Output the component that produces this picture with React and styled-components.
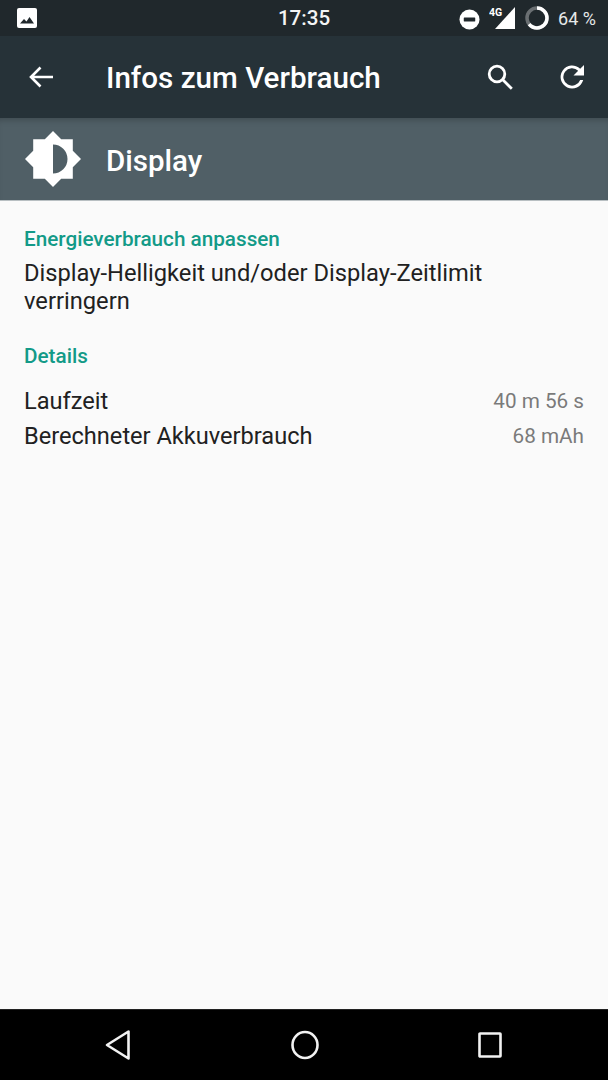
import React from "react";
import styled, { createGlobalStyle } from "styled-components";

const GlobalStyle = createGlobalStyle`
  html, body {
    margin: 0;
    padding: 0;
    background: #fafafa;
    font-family: Roboto, "Liberation Sans", sans-serif;
  }
`;

const Page = styled.div`
  width: 608px;
  height: 1080px;
  display: flex;
  flex-direction: column;
  overflow: hidden;
  background: #fafafa;
`;

const StatusBar = styled.div`
  height: 36px;
  flex: none;
  background: #20282c;
  display: grid;
  grid-template-columns: 1fr auto 1fr;
  align-items: center;
  padding: 0 12px 0 17px;
  color: #fff;
`;

const StatusLeft = styled.div`
  display: flex;
  align-items: center;
`;

const Clock = styled.div`
  margin-right: 5px;
  font-size: 20.6px;
  font-weight: 500;
  color: #f4f5f5;
`;

const StatusRight = styled.div`
  display: flex;
  align-items: center;
  justify-content: flex-end;
  gap: 9px;
`;

const Battery = styled.span`
  font-size: 18px;
  color: #e6e8e8;
`;

const Toolbar = styled.div`
  height: 82px;
  flex: none;
  background: #263238;
  display: flex;
  align-items: center;
  padding: 0 22px 0 28px;
  color: #fff;
`;

const Title = styled.h1`
  margin: 2px 0 0 52px;
  font-size: 29.6px;
  font-weight: 500;
  flex: 1;
`;

const ToolIcons = styled.div`
  display: flex;
  align-items: center;
  gap: 44px;
`;

const SubHeader = styled.div`
  height: 83px;
  flex: none;
  background: #505f66;
  box-shadow: inset 0 6px 6px -4px rgba(0, 0, 0, 0.22);
  border-bottom: 1px solid #b8bfc2;
  box-sizing: border-box;
  display: flex;
  align-items: center;
  padding-left: 25px;
`;

const SubTitle = styled.div`
  margin: 3px 0 0 25px;
  font-size: 29.5px;
  font-weight: 500;
  color: #fff;
`;

const Content = styled.main`
  flex: 1;
  padding: 26px 24px 0;
`;

const SectionTitle = styled.h2`
  margin: 0;
  font-size: 20.7px;
  line-height: 24px;
  font-weight: 500;
  color: #139a88;
`;

const Summary = styled.p`
  margin: 8px 0 0;
  font-size: 23.7px;
  line-height: 28px;
  color: #212121;
`;

const DetailsBlock = styled.section`
  margin-top: 29px;
`;

const DetailRows = styled.div`
  margin-top: 15px;
`;

const Row = styled.div`
  height: 35.5px;
  display: flex;
  align-items: center;
  justify-content: space-between;
`;

const Label = styled.span`
  font-size: 23.6px;
  color: #212121;
`;

const Value = styled.span`
  font-size: 20.7px;
  color: #7a7a7a;
`;

const NavBar = styled.nav`
  height: 71px;
  flex: none;
  background: #000;
  border-top: 1px solid #222;
  box-sizing: border-box;
  display: flex;
  align-items: center;
  justify-content: space-between;
  padding: 0 106px 0 105px;
`;

const DndSvg = styled.svg`
  margin-top: 2px;
`;

const ImageIcon = () => (
  <svg width="20" height="20" viewBox="0 0 20 20">
    <rect width="20" height="20" rx="2" fill="#fff" />
    <path d="M3 15.5l4-4.5 2.5 2.5 3-4.5 4.5 6.500z" fill="#20282c" />
  </svg>
);

const DndIcon = () => (
  <DndSvg width="21" height="21" viewBox="0 0 22 22">
    <circle cx="11" cy="11" r="10.500" fill="#fff" />
    <rect x="5" y="9" width="12" height="4" rx="0.500" fill="#20282c" />
  </DndSvg>
);

const SignalIcon = () => (
  <svg width="27" height="24" viewBox="0 0 27 24">
    <path d="M26 1v22H6z" fill="#fff" />
    <text x="0" y="10" fontSize="10.500" fontWeight="700" fontFamily="Roboto, sans-serif" fill="#fff">4G</text>
  </svg>
);

const BatteryRing = () => (
  <svg width="24" height="24" viewBox="0 0 24 24" fill="none" strokeWidth="3.500">
    <circle cx="12" cy="12" r="10" stroke="#6a6f72" />
    <circle cx="12" cy="12" r="10" stroke="#fff" strokeDasharray="40.200 62.830" transform="rotate(-90 12 12)" />
  </svg>
);

const BackIcon = () => (
  <svg width="26" height="26" viewBox="0 0 26 26" fill="none" stroke="#fff" strokeWidth="2.600">
    <path d="M25 13H3M12.500 3.500L3 13l9.500 9.500" />
  </svg>
);

const SearchIcon = () => (
  <svg width="28" height="28" viewBox="0 0 28 28" fill="none" stroke="#fff" strokeWidth="2.800">
    <circle cx="11" cy="11" r="7.800" />
    <path d="M16.800 16.800l9 9" />
  </svg>
);

const RefreshIcon = () => (
  <svg width="28" height="28" viewBox="0 0 28 28">
    <path d="M22.200 5.800A11.500 11.500 0 1 0 25.200 17h-3a8.700 8.700 0 1 1-2-9.200L15.500 12.500H26V2z" fill="#fff" />
  </svg>
);

const BrightnessIcon = () => (
  <svg width="56" height="56" viewBox="0 0 56 56">
    <path
      fillRule="evenodd"
      fill="#fff"
      d="M28 0l8.200 8.200h11.600v11.600L56 28l-8.200 8.200v11.600H36.200L28 56l-8.200-8.200H8.200V36.200L0 28l8.200-8.200V8.200h11.600zM28 13.500v29a14.500 14.500 0 0 0 0-29z"
    />
  </svg>
);

const NavBack = () => (
  <svg width="26" height="32" viewBox="0 0 26 32" fill="none" stroke="#f2f2f2" strokeWidth="2.600" strokeLinejoin="round">
    <path d="M23.500 2.500v27L2 16z" />
  </svg>
);

const NavHome = () => (
  <svg width="28" height="30" viewBox="0 0 28 30" fill="none" stroke="#f2f2f2" strokeWidth="2.600">
    <ellipse cx="14" cy="15" rx="12.500" ry="13" />
  </svg>
);

const NavRecent = () => (
  <svg width="24" height="26" viewBox="0 0 24 26" fill="none" stroke="#f2f2f2" strokeWidth="2.600" strokeLinejoin="round">
    <rect x="1.500" y="1.500" width="21" height="23" rx="0.500" />
  </svg>
);

const details = [
  { label: "Laufzeit", value: "40 m 56 s" },
  { label: "Berechneter Akkuverbrauch", value: "68 mAh" },
];

export default function App() {
  return (
    <Page>
      <GlobalStyle />
      <StatusBar>
        <StatusLeft>
          <ImageIcon />
        </StatusLeft>
        <Clock>17:35</Clock>
        <StatusRight>
          <DndIcon />
          <SignalIcon />
          <BatteryRing />
          <Battery>64 %</Battery>
        </StatusRight>
      </StatusBar>
      <Toolbar>
        <BackIcon />
        <Title>Infos zum Verbrauch</Title>
        <ToolIcons>
          <SearchIcon />
          <RefreshIcon />
        </ToolIcons>
      </Toolbar>
      <SubHeader>
        <BrightnessIcon />
        <SubTitle>Display</SubTitle>
      </SubHeader>
      <Content>
        <section>
          <SectionTitle>Energieverbrauch anpassen</SectionTitle>
          <Summary>
            Display-Helligkeit und/oder Display-Zeitlimit
            <br />
            verringern
          </Summary>
        </section>
        <DetailsBlock>
          <SectionTitle>Details</SectionTitle>
          <DetailRows>
            {details.map((item) => (
              <Row key={item.label}>
                <Label>{item.label}</Label>
                <Value>{item.value}</Value>
              </Row>
            ))}
          </DetailRows>
        </DetailsBlock>
      </Content>
      <NavBar>
        <NavBack />
        <NavHome />
        <NavRecent />
      </NavBar>
    </Page>
  );
}
